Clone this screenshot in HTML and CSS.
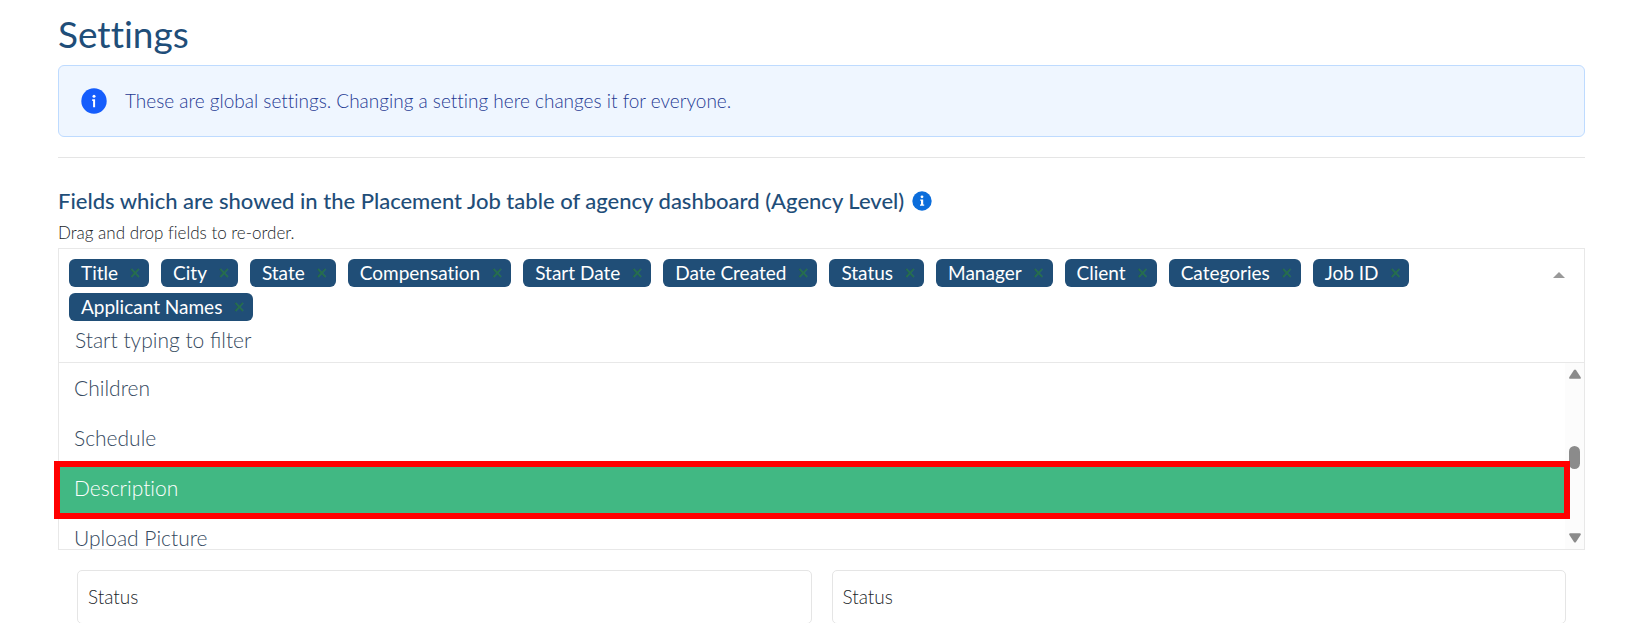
FILE: index.html
```html
<!DOCTYPE html>
<html lang="en">
<head>
    <meta charset="UTF-8">
    <meta name="viewport" content="width=device-width, initial-scale=1.0">
    <title>Settings</title>
    <link rel="stylesheet" href="styles.css">
</head>
<body>
    <main class="settings">
        <h1>Settings</h1>

        <div class="alert">
            <svg class="alert-icon" viewBox="0 0 26 26" aria-hidden="true">
                <circle cx="13" cy="13" r="12.7" fill="#155dfc"/>
                <circle cx="13" cy="8.2" r="1.5" fill="#fff"/>
                <path d="M11.2 11.2h2.9v8.1h-2v-6.4h-.9z" fill="#fff"/>
            </svg>
            <p>These are global settings. Changing a setting here changes it for everyone.</p>
        </div>

        <hr>

        <section>
            <h2 class="field-title">
                <label for="fieldFilter">Fields which are showed in the Placement Job table of agency dashboard (Agency Level)</label>
                <svg class="info-icon" viewBox="0 0 20 20" aria-hidden="true">
                    <circle cx="10" cy="10" r="9.7" fill="#0b6ddb"/>
                    <circle cx="10" cy="5.8" r="1.4" fill="#fff"/>
                    <path d="M8.2 8.4h3v5h1v1.4H8v-1.4h1V9.8h-.8z" fill="#fff"/>
                </svg>
            </h2>
            <p class="hint">Drag and drop fields to re-order.</p>

            <div class="multiselect">
                <div class="selected">
                    <div class="tags">
                        <span class="tag">Title<button type="button" aria-label="Remove Title">×</button></span>
                        <span class="tag">City<button type="button" aria-label="Remove City">×</button></span>
                        <span class="tag">State<button type="button" aria-label="Remove State">×</button></span>
                        <span class="tag">Compensation<button type="button" aria-label="Remove Compensation">×</button></span>
                        <span class="tag">Start Date<button type="button" aria-label="Remove Start Date">×</button></span>
                        <span class="tag">Date Created<button type="button" aria-label="Remove Date Created">×</button></span>
                        <span class="tag">Status<button type="button" aria-label="Remove Status">×</button></span>
                        <span class="tag">Manager<button type="button" aria-label="Remove Manager">×</button></span>
                        <span class="tag">Client<button type="button" aria-label="Remove Client">×</button></span>
                        <span class="tag">Categories<button type="button" aria-label="Remove Categories">×</button></span>
                        <span class="tag">Job ID<button type="button" aria-label="Remove Job ID">×</button></span>
                        <span class="tag">Applicant Names<button type="button" aria-label="Remove Applicant Names">×</button></span>
                    </div>
                    <button type="button" class="toggle" aria-label="Close list">
                        <svg viewBox="0 0 12 6" aria-hidden="true"><path d="M6 0l6 6H0z" fill="#999"/></svg>
                    </button>
                    <input type="text" id="fieldFilter" class="filter" placeholder="Start typing to filter">
                </div>

                <div class="dropdown">
                    <ul class="options" role="listbox" aria-label="Fields">
                        <li role="option">Children</li>
                        <li role="option">Schedule</li>
                        <li role="option" class="active" aria-selected="true">Description</li>
                        <li role="option">Upload Picture</li>
                    </ul>
                    <div class="scrollbar" aria-hidden="true">
                        <svg viewBox="0 0 12 10"><path d="M5 1Q6-.2 7 1l4.600 7q.8 1.800-1 1.800H1.400q-1.800 0-1-1.800z" fill="#8b8b8b"/></svg>
                        <div class="thumb"></div>
                        <svg viewBox="0 0 12 10"><path d="M5 9q1 1.200 2 0l4.600-7q.8-1.800-1-1.800H1.400Q-.4.200.4 2z" fill="#8b8b8b"/></svg>
                    </div>
                    <div class="highlight"></div>
                </div>
            </div>
        </section>

        <div class="cards">
            <div class="card">Status</div>
            <div class="card">Status</div>
        </div>
    </main>
</body>
</html>
```
FILE: styles.css
```css
* {
    box-sizing: border-box;
}
html {
    overflow: hidden;
}
body {
    margin: 0;
    font-family: Lato, sans-serif;
    font-size: 19px;
    font-weight: 300;
    font-variant-ligatures: none;
    color: #212529;
    background: #fff;
}
h1, h2, p, ul {
    margin: 0;
    padding: 0;
}
.settings {
    padding: 11px 43px 0 58px;
}
h1 {
    font-size: 37px;
    font-weight: 400;
    line-height: 46px;
    margin-bottom: 8px;
    color: #1f4e79;
}
.alert {
    display: flex;
    align-items: center;
    gap: 18px;
    padding: 21px 22px;
    line-height: 28px;
    color: #1f3a93;
    background: #eff6ff;
    border: 1px solid #bedbff;
    border-radius: 6px;
}
.alert-icon {
    width: 26px;
    height: 26px;
}
hr {
    margin: 20px 0 28px;
    border: 0;
    border-top: 1px solid #e5e5e5;
}
.field-title {
    display: flex;
    align-items: center;
    gap: 8px;
    font-size: 22px;
    font-weight: 500;
    line-height: 30px;
    color: #1f4e79;
}
.info-icon {
    width: 20px;
    height: 20px;
}
.hint {
    padding: 4px 0 2px;
    font-size: 17px;
    line-height: 26px;
}
.selected {
    display: grid;
    grid-template-columns: 1fr 40px;
    padding: 10px 5px 5px 10px;
    border: 1px solid #e8e8e8;
}
.tags {
    display: flex;
    flex-wrap: wrap;
    gap: 6px 12px;
}
.tag {
    display: flex;
    align-items: center;
    height: 28px;
    padding-left: 12px;
    font-weight: 400;
    line-height: 26px;
    color: #fff;
    background: #204e77;
    border-radius: 6px;
}
.tag button {
    width: 28px;
    margin-left: 3px;
    padding: 0;
    font-family: "DejaVu Sans", sans-serif;
    font-size: 15px;
    font-weight: 700;
    color: #266d4d;
    background: none;
    border: 0;
}
.toggle {
    align-self: start;
    height: 32px;
    padding: 0;
    line-height: 0;
    background: none;
    border: 0;
}
.toggle svg {
    width: 12px;
    height: 6px;
}
.filter {
    grid-column: 1 / -1;
    height: 36px;
    padding: 0 0 0 6px;
    font-family: inherit;
    font-size: 21px;
    font-weight: 300;
    color: #35495e;
    background: none;
    border: 0;
    outline: none;
}
.filter::placeholder {
    color: #35495e;
    opacity: 1;
}
.dropdown {
    position: relative;
    display: flex;
    height: 187px;
    border: 1px solid #e8e8e8;
    border-top: 0;
}
.options {
    flex: 1;
    overflow: hidden;
    list-style: none;
    font-size: 21px;
    color: #35495e;
}
.options li {
    height: 50px;
    padding-left: 15px;
    line-height: 50px;
}
.options .active {
    color: #fff;
    background: #41b883;
}
.scrollbar {
    display: flex;
    flex-direction: column;
    align-items: center;
    width: 19px;
    padding: 6px 0;
    background: #fcfcfc;
}
.scrollbar svg {
    width: 12px;
    height: 10px;
}
.thumb {
    width: 11px;
    height: 23px;
    margin: 67px 0 auto;
    background: #8b8b8b;
    border-radius: 6px;
}
/* red frame around the active option */
.highlight {
    position: absolute;
    top: 98px;
    left: -5px;
    right: 14px;
    height: 58px;
    border: 6px solid #f00;
}
.cards {
    display: grid;
    grid-template-columns: 1fr 1fr;
    gap: 20px;
    padding: 20px 19px 0;
}
.card {
    padding: 12px 10px;
    line-height: 28px;
    border: 1px solid #e5e5e5;
    border-radius: 5px;
}
```
